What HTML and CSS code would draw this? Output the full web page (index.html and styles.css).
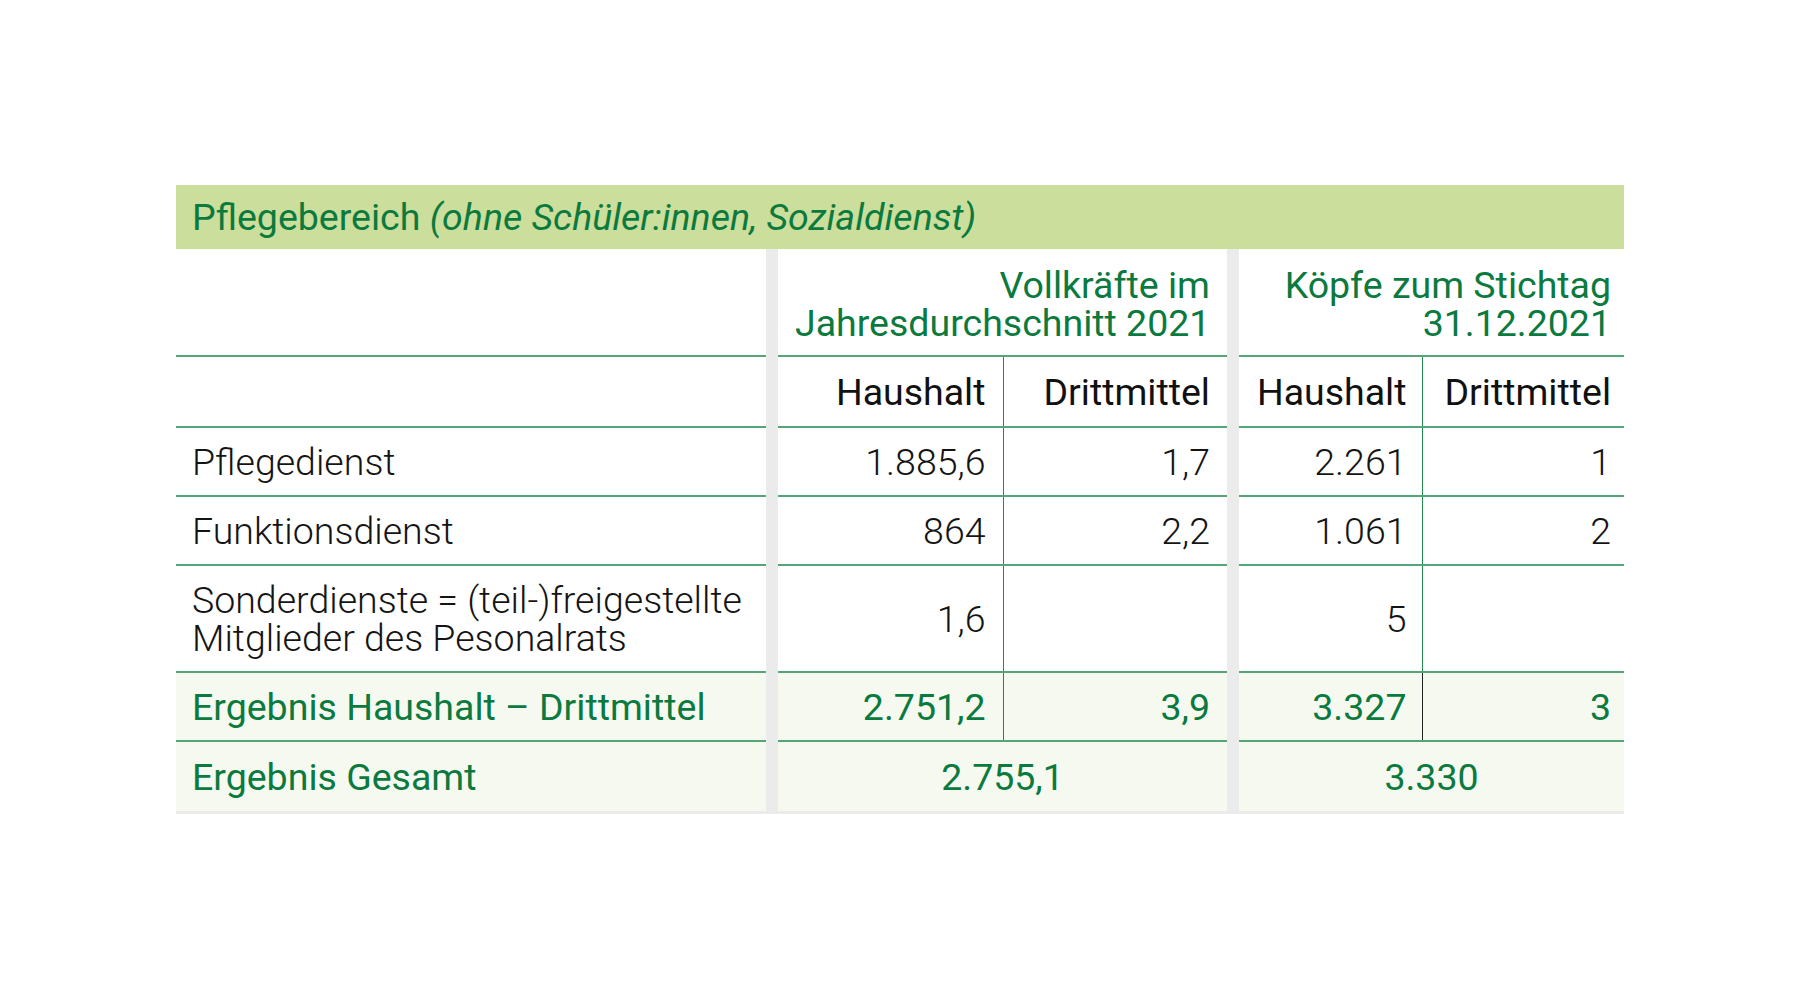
FILE: index.html
```html
<!DOCTYPE html>
<html lang="de">
<head>
<meta charset="utf-8">
<title>Pflegebereich</title>
<link rel="stylesheet" href="styles.css">
</head>
<body>
<div class="page">
  <div class="frame">
    <table class="stats">
      <colgroup>
        <col class="c-label">
        <col class="c-sep">
        <col class="c-a">
        <col class="c-b">
        <col class="c-sep">
        <col class="c-c">
        <col class="c-d">
      </colgroup>
      <tr class="title">
        <td colspan="7">Pflegebereich <em>(ohne Schüler:innen, Sozialdienst)</em></td>
      </tr>
      <tr class="group">
        <td class="label"></td>
        <td class="sep" rowspan="7"></td>
        <td class="num green" colspan="2">Vollkräfte im<br>Jahresdurchschnitt 2021</td>
        <td class="sep" rowspan="7"></td>
        <td class="num green last" colspan="2">Köpfe zum Stichtag<br>31.12.2021</td>
      </tr>
      <tr class="sub">
        <td class="label"></td>
        <td class="num head">Haushalt</td>
        <td class="num head vl">Drittmittel</td>
        <td class="num head c4">Haushalt</td>
        <td class="num head vl last">Drittmittel</td>
      </tr>
      <tr class="row">
        <td class="label">Pflegedienst</td>
        <td class="num">1.885,6</td>
        <td class="num vl">1,7</td>
        <td class="num c4">2.261</td>
        <td class="num vl last">1</td>
      </tr>
      <tr class="row">
        <td class="label">Funktionsdienst</td>
        <td class="num">864</td>
        <td class="num vl">2,2</td>
        <td class="num c4">1.061</td>
        <td class="num vl last">2</td>
      </tr>
      <tr class="row">
        <td class="label">Sonderdienste = (teil-)freigestellte<br>Mitglieder des Pesonalrats</td>
        <td class="num">1,6</td>
        <td class="num vl"></td>
        <td class="num c4">5</td>
        <td class="num vl last"></td>
      </tr>
      <tr class="sum">
        <td class="label green">Ergebnis Haushalt – Drittmittel</td>
        <td class="num green">2.751,2</td>
        <td class="num green vl">3,9</td>
        <td class="num green c4">3.327</td>
        <td class="num green vl dark last">3</td>
      </tr>
      <tr class="total">
        <td class="label green">Ergebnis Gesamt</td>
        <td class="mid green" colspan="2">2.755,1</td>
        <td class="mid green" colspan="2">3.330</td>
      </tr>
    </table>
  </div>
</div>
</body>
</html>
```

FILE: styles.css
```css
html, body {
  margin: 0;
  padding: 0;
  background: #ffffff;
}

.page {
  padding: 185px 0 0 176px;
  font-family: Roboto, "Liberation Sans", sans-serif;
  font-size: 37.5px;
  line-height: 38px;
  color: #141414;
}

.frame {
  width: 1448px;
  border-bottom: 3px solid #ebebeb;
}

.stats {
  width: 1448px;
  table-layout: fixed;
  border-collapse: collapse;
  border-spacing: 0;
}

.c-label { width: 590px; }
.c-sep { width: 12px; }
.c-a { width: 225px; }
.c-b { width: 224px; }
.c-c { width: 183px; }
.c-d { width: 202px; }

.stats td {
  padding: 15px 17px 14px 17px;
  vertical-align: middle;
  font-weight: 300;
  border-bottom: 2px solid #55a579;
  white-space: nowrap;
}

.stats .title td {
  background: #cbde9b;
  color: #0b7a3e;
  font-weight: 400;
  padding: 13px 16px 13px 16px;
  border-bottom: none;
}

.title em {
  font-style: italic;
}

.stats td.sep {
  background: #ebebeb;
  padding: 0;
  border-bottom: none;
}

.stats td.label {
  padding-left: 16px;
}

.stats td.num {
  text-align: right;
}

.stats td.c4 {
  padding-right: 15px;
}

.stats td.last {
  padding-right: 13px;
}

.stats td.mid {
  text-align: center;
}

.stats td.green {
  color: #0b7a3e;
  font-weight: 400;
}

.stats .group td {
  padding-top: 17px;
  padding-bottom: 13px;
}

.stats .sub td {
  padding-top: 16px;
  padding-bottom: 15px;
}

.stats td.head {
  font-weight: 400;
  color: #111111;
}

.stats td.vl {
  border-left: 1px solid #1f8a4c;
}

.stats td.vl.dark {
  border-left-color: #222222;
}

.stats .sum td,
.stats .total td {
  background: #f6f9f0;
}

.stats .sum td.sep,
.stats .total td.sep {
  background: #ebebeb;
}

.stats .total td {
  border-bottom: none;
  padding-top: 16px;
  padding-bottom: 15px;
}
```
